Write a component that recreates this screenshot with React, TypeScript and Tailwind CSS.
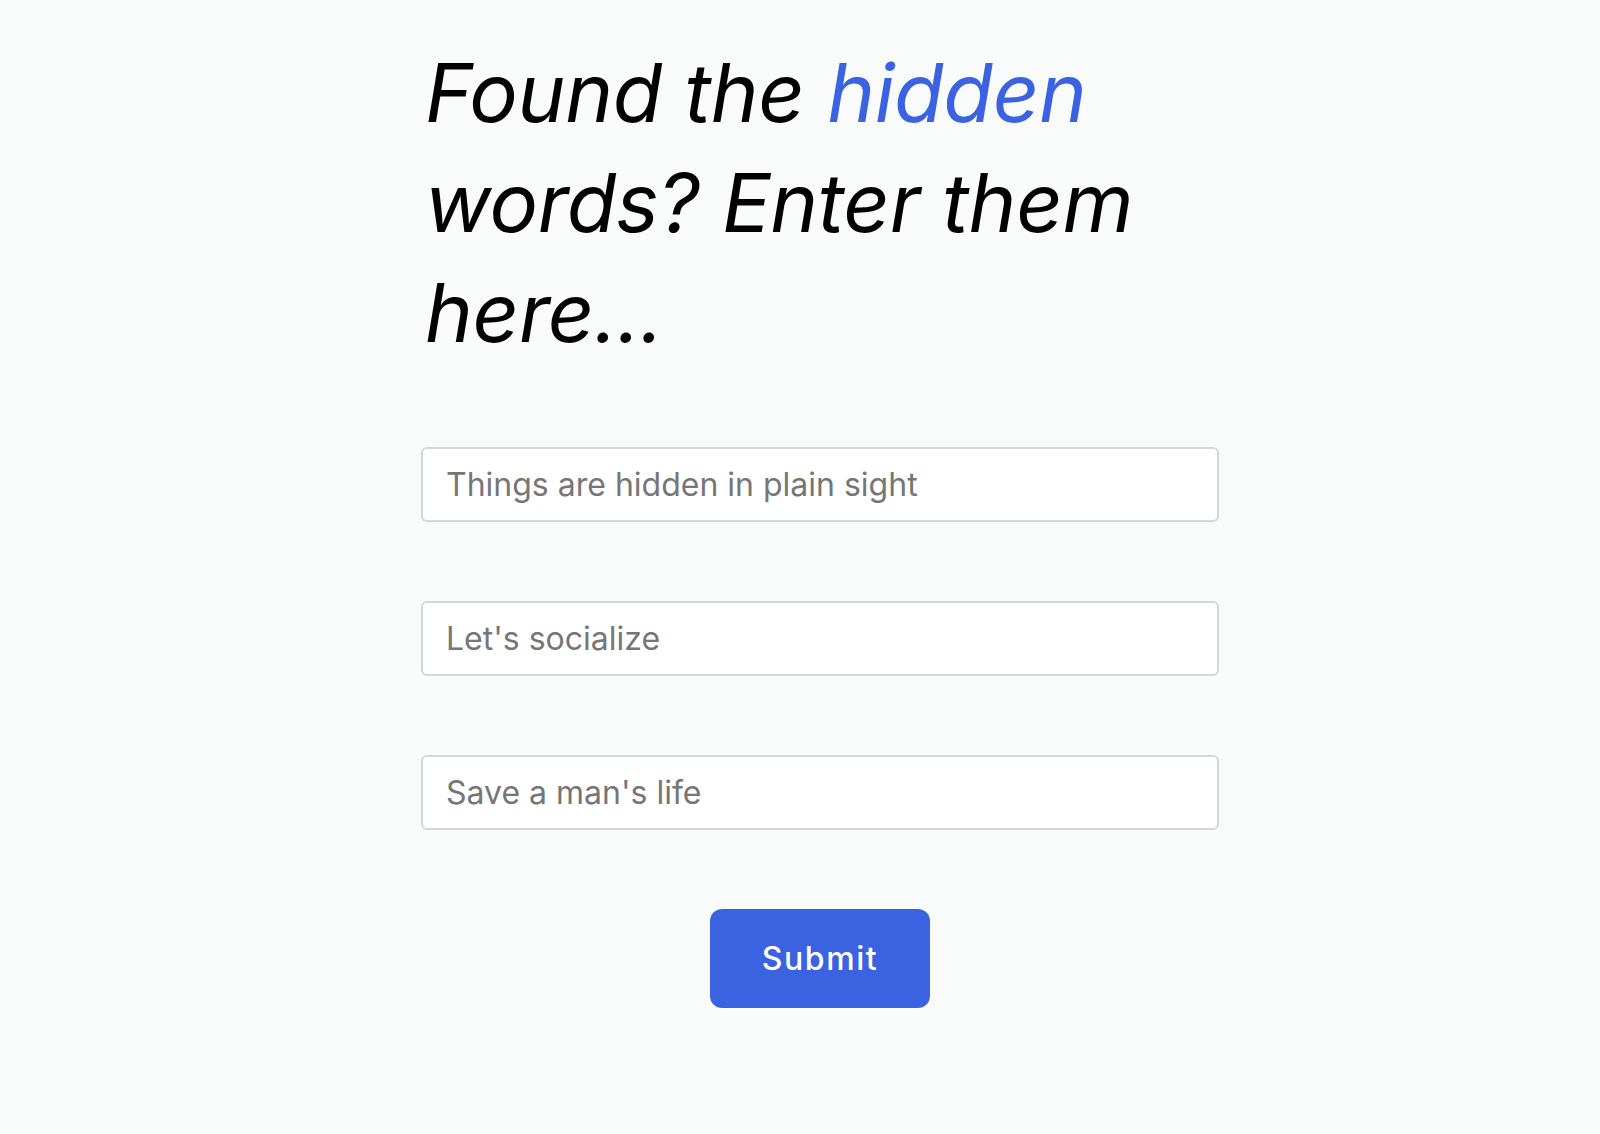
import { useState } from "react";

const fields = [
  { name: "first", placeholder: "Things are hidden in plain sight" },
  { name: "second", placeholder: "Let's socialize" },
  { name: "third", placeholder: "Save a man's life" },
];

export default function App() {
  const [values, setValues] = useState<Record<string, string>>({});

  return (
    <div className="min-h-[1134px] bg-[#f9fbfa] flex justify-center pl-10 font-['Inter',sans-serif]">
      <div className="w-[798px] pt-[38px]">
        <h1 className="text-[81px] leading-[110px] italic font-normal text-black tracking-[-0.004em] pl-1 pr-[60px]">
          Found the <span className="text-[#3b62e1]">hidden</span> words? Enter them here...
        </h1>

        <form
          className="mt-[79px] flex flex-col gap-[79px]"
          onSubmit={(e) => e.preventDefault()}
        >
          {fields.map((f) => (
            <input
              key={f.name}
              type="text"
              value={values[f.name] ?? ""}
              onChange={(e) => setValues({ ...values, [f.name]: e.target.value })}
              placeholder={f.placeholder}
              className="h-[75px] w-full bg-white border-2 border-[#d4d7dc] rounded-md pl-[23px] pr-6 text-[32px] text-gray-800 placeholder:text-[#767676] focus:outline-none"
            />
          ))}
          <div className="flex justify-center">
            <button
              type="submit"
              className="w-[220px] h-[99px] bg-[#3b62e1] rounded-xl text-white text-[32px] font-medium tracking-[0.05em]"
            >
              Submit
            </button>
          </div>
        </form>
      </div>
    </div>
  );
}
